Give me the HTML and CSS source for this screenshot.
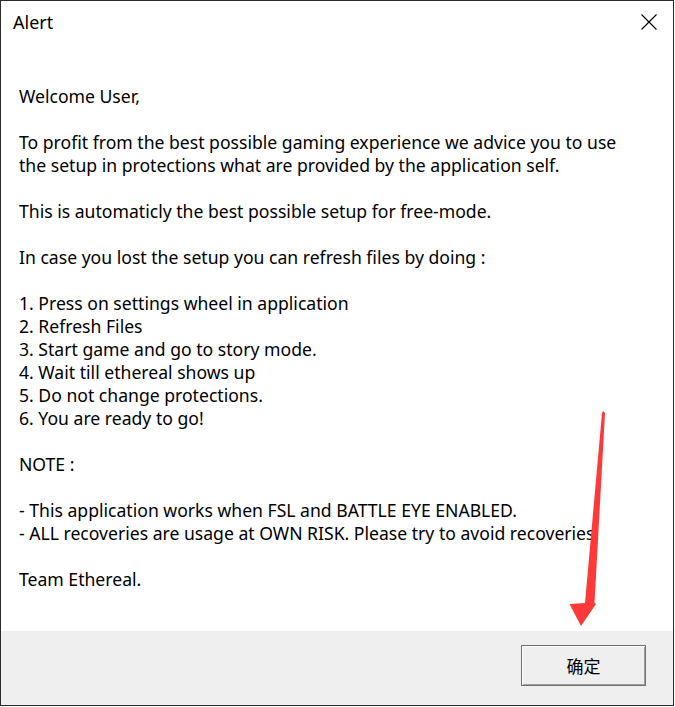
FILE: index.html
```html
<!DOCTYPE html>
<html>
<head>
<meta charset="utf-8">
<link rel="stylesheet" href="styles.css">
</head>
<body>
<div class="window">
  <div class="titlebar">
    <span class="title">Alert</span>
    <svg class="close" width="16" height="16" viewBox="0 0 16 16"><path d="M0.5 0.5 L15.5 15.5 M15.5 0.5 L0.5 15.5" stroke="#000" stroke-width="1.1" fill="none"/></svg>
  </div>
  <div class="content">
    <p>Welcome User,</p>
    <p>To profit from the best possible gaming experience we advice you to use<br>the setup in protections what are provided by the application self.</p>
    <p>This is automaticly the best possible setup for free-mode.</p>
    <p>In case you lost the setup you can refresh files by doing :</p>
    <p>1. Press on settings wheel in application<br>2. Refresh Files<br>3. Start game and go to story mode.<br>4. Wait till ethereal shows up<br>5. Do not change protections.<br>6. You are ready to go!</p>
    <p>NOTE :</p>
    <p>- This application works when FSL and BATTLE EYE ENABLED.<br>- ALL recoveries are usage at OWN RISK. Please try to avoid recoveries.</p>
    <p>Team Ethereal.</p>
  </div>
  <div class="footer">
    <button class="ok">确定</button>
  </div>
  <svg class="arrow" width="675" height="707" viewBox="0 0 675 707"><polygon points="603,411 605,413 594.5,603 596,604 581,626 569.5,604 585,603 602,413" fill="#fd3a3a"/></svg>
</div>
</body>
</html>
```

FILE: styles.css
```css
html, body {
  margin: 0;
  padding: 0;
  background: #ffffff;
}
.window {
  position: relative;
  width: 674px;
  height: 706px;
  border: 1px solid #2b2b2b;
  box-sizing: border-box;
  display: flex;
  flex-direction: column;
  background: #fff;
  font-family: "Noto Sans", "Noto Sans CJK SC", sans-serif;
  color: #000;
}
.titlebar {
  height: 44px;
  display: flex;
  align-items: center;
  justify-content: space-between;
  padding: 0 16px 0 12px;
  flex: none;
}
.title {
  font-size: 18px;
  margin-top: -2px;
}
.close {
  display: block;
  margin-top: -2px;
}
.content {
  flex: 1;
  padding: 40px 0 0 18px;
  font-size: 17.6px;
  line-height: 23px;
}
.content p {
  margin: 0 0 23px 0;
  white-space: nowrap;
}
.footer {
  height: 74px;
  flex: none;
  background: #efefef;
  display: flex;
  justify-content: flex-end;
  align-items: flex-start;
  padding: 14px 27px 0 0;
  box-sizing: border-box;
}
.ok {
  width: 125px;
  height: 41px;
  background: #efefef;
  border: 1px solid #707070;
  box-shadow: inset 1px 1px 0 #ffffff, inset -1px -1px 0 #a0a0a0;
  font-family: "Noto Sans CJK SC", sans-serif;
  font-size: 17px;
  color: #000;
  padding: 0;
}
.arrow {
  position: absolute;
  left: -1px;
  top: -1px;
  pointer-events: none;
}
```
